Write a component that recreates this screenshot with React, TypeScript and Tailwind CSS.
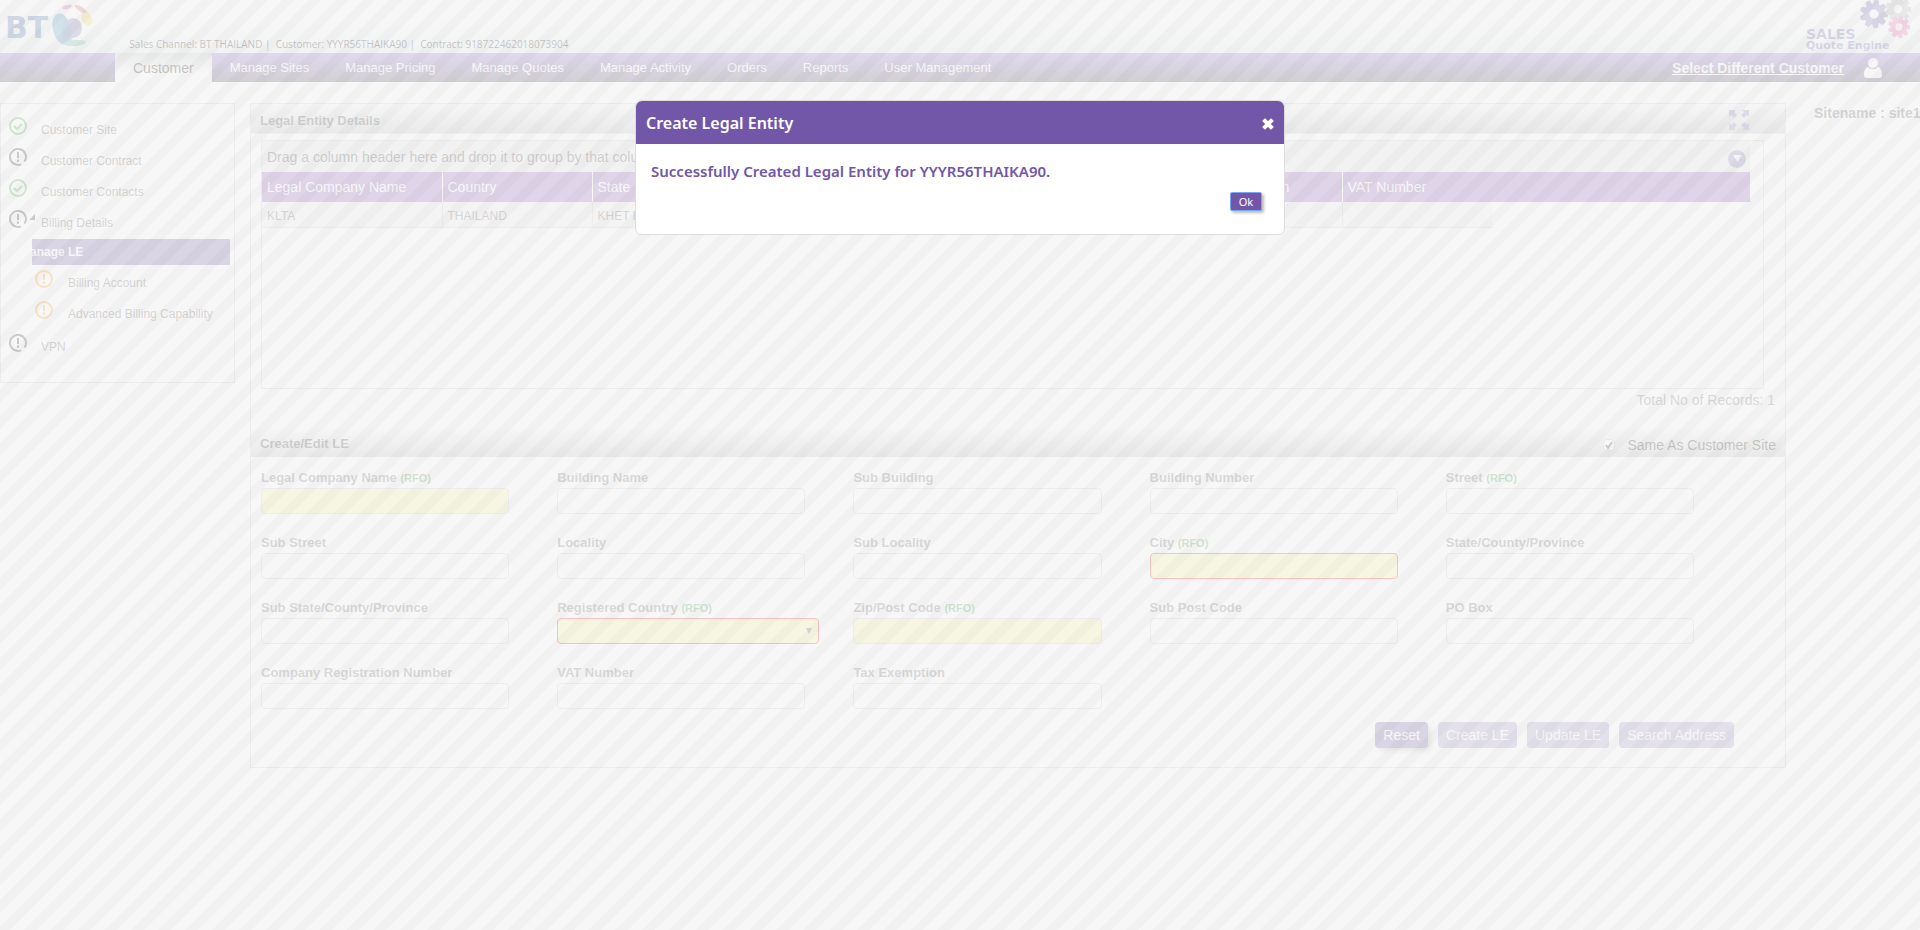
import React from "react";

const navItems = [
  "Manage Sites",
  "Manage Pricing",
  "Manage Quotes",
  "Manage Activity",
  "Orders",
  "Reports",
  "User Management",
];

const columns = [
  "Legal Company Name",
  "Country",
  "State",
  "City",
  "Street",
  "Zip/Post Code",
  "Tax Exemption",
  "VAT Number",
];
const row = ["KLTA", "THAILAND", "KHET BANG RAK", "BANGKOK", "", "", "", ""];

type Field = { label: string; rfo?: boolean; kind?: "yellow" | "error" | "select" };

const fields: Field[] = [
  { label: "Legal Company Name", rfo: true, kind: "yellow" },
  { label: "Building Name" },
  { label: "Sub Building" },
  { label: "Building Number" },
  { label: "Street", rfo: true },
  { label: "Sub Street" },
  { label: "Locality" },
  { label: "Sub Locality" },
  { label: "City", rfo: true, kind: "error" },
  { label: "State/County/Province" },
  { label: "Sub State/County/Province" },
  { label: "Registered Country", rfo: true, kind: "select" },
  { label: "Zip/Post Code", rfo: true, kind: "yellow" },
  { label: "Sub Post Code" },
  { label: "PO Box" },
  { label: "Company Registration Number" },
  { label: "VAT Number" },
  { label: "Tax Exemption" },
];

function Globe() {
  return (
    <svg width="44" height="50" viewBox="46 0 44 50" className="ml-0.5" aria-hidden="true">
      <ellipse cx="69" cy="28" rx="9" ry="10" fill="#7a72b0" />
      <ellipse cx="58" cy="29" rx="9" ry="16" transform="rotate(-14 58 29)" fill="#4a96c4" />
      <path d="M60 15c6 6 9 16 8 27-5 3-8 2-10-3z" fill="#4a5fa6" opacity=".45" />
      <ellipse cx="63" cy="7" rx="5" ry="2" transform="rotate(-18 63 7)" fill="#e0559f" />
      <path d="M71 5c5-1 13 5 16 13 1 3 0 5-1 4-2-5-5-8-9-10-4-3-7-5-6-7z" fill="#e0605a" />
      <ellipse cx="83" cy="19" rx="5" ry="7" transform="rotate(-28 83 19)" fill="#f5d850" />
      <ellipse cx="71" cy="43" rx="11" ry="3" transform="rotate(-4 71 43)" fill="#58b890" />
    </svg>
  );
}

function Gear({ cx, cy, r, color }: { cx: number; cy: number; r: number; color: string }) {
  const teeth = [0, 40, 80, 120, 160, 200, 240, 280, 320];
  return (
    <g fill={color}>
      {teeth.map((a) => (
        <path
          key={a}
          d={`M${cx - r * 0.24} ${cy - r * 0.6}L${cx - r * 0.16} ${cy - r}H${cx + r * 0.16}L${cx + r * 0.24} ${cy - r * 0.6}z`}
          transform={`rotate(${a + 12} ${cx} ${cy})`}
        />
      ))}
      <circle cx={cx} cy={cy} r={r * 0.54} fill="none" stroke={color} strokeWidth={r * 0.42} />
    </g>
  );
}

function StatusIcon({ type }: { type: "ok" | "dark" | "warn" }) {
  const color = type === "ok" ? "#33a833" : type === "dark" ? "#222222" : "#ff9900";
  return (
    <svg width="18" height="18" viewBox="0 0 18 18" fill="none" stroke={color} strokeWidth="2" className="shrink-0" aria-hidden="true">
      {type === "dark" ? <path d="M12 16.300A8 8 0 1 1 15.500 13.500" /> : <circle cx="9" cy="9" r="8" />}
      {type === "ok" ? (
        <path d="M5 9l3 3 5-5" />
      ) : (
        <>
          <path d="M9 4v6" />
          <path d="M9 11.500v2.200" />
        </>
      )}
    </svg>
  );
}

function TreeItem({ type, label, sub, caret }: { type: "ok" | "dark" | "warn"; label: string; sub?: boolean; caret?: boolean }) {
  return (
    <li className={sub ? "flex h-[31px] items-start pl-[34px]" : "flex h-[31px] items-start pl-2"}>
      <StatusIcon type={type} />
      <span className={sub ? "flex w-[15px]" : "flex w-3.5 pl-0.5"}>
        {caret && (
          <svg width="6" height="6" viewBox="0 0 6 6" className="mt-1" aria-hidden="true">
            <path d="M0 6L6 0V6z" fill="#222" />
          </svg>
        )}
      </span>
      <a href="#" className="pt-[5px] text-xs leading-4 text-[#555]">{label}</a>
    </li>
  );
}

export default function App() {
  return (
    <div className="relative min-h-screen overflow-hidden bg-white font-['Liberation_Sans',Arial,sans-serif] text-[#555]">
      <header className="flex h-[53px] items-start justify-between bg-linear-to-b from-white from-40% to-[#e4ecee] pl-[5px]">
        <div className="flex items-end">
          <div className="flex items-start text-[#3465a8]">
            <span className="pt-2 font-['DejaVu_Sans',sans-serif] text-[30px] leading-10 font-bold">BT</span>
            <Globe />
          </div>
          <p className="pl-[35px] font-['Open_Sans','Noto_Sans',sans-serif] text-[10px] leading-3 text-black">
            Sales Channel: BT THAILAND |&nbsp; Customer: YYYR56THAIKA90 |&nbsp; Contract: 918722462018073904
          </p>
        </div>
        <div className="relative h-[53px] w-[114px] font-['DejaVu_Sans',sans-serif] font-bold text-[#6a5aae]">
          <svg width="56" height="40" viewBox="0 0 56 40" className="absolute top-0 right-2" aria-hidden="true">
            <Gear cx={18} cy={14} r={14} color="#7468b4" />
            <Gear cx={42} cy={9} r={13} color="#b4b4b4" />
            <Gear cx={43} cy={27} r={11} color="#ee60ac" />
          </svg>
          <div className="pt-7 text-sm leading-3">SALES</div>
          <div className="text-[11px] leading-3 whitespace-nowrap">Quote Engine</div>
        </div>
      </header>

      <nav className="flex h-[29px] items-stretch bg-linear-to-b from-[#9068dc] to-[#463c54] pr-[38px] pl-[115px] text-[13px] text-white">
        <a href="#" className="flex items-center bg-linear-to-b from-[#c4c4c4] to-white to-70% px-[18px] text-sm text-black">Customer</a>
        {navItems.map((item) => (
          <a key={item} href="#" className="flex items-center px-[18px]">{item}</a>
        ))}
        <a href="#" className="ml-auto flex items-center text-sm font-bold underline">Select Different Customer</a>
        <button type="button" aria-label="User profile" className="ml-5 flex items-center">
          <svg width="18" height="20" viewBox="0 0 18 20" fill="white" aria-hidden="true">
            <circle cx="9" cy="5" r="5" />
            <path d="M4 9c3 3 7 3 10 0 3 1 4 4 4 8 0 2-1 3-3 3H3c-2 0-3-1-3-3 0-4 1-7 4-8z" />
          </svg>
        </button>
      </nav>

      <main className="flex items-start pt-[21px]">
        <aside className="mr-[15px] h-[280px] w-[235px] shrink-0 border border-[#ccc]">
          <ul className="pt-[13px]">
            <TreeItem type="ok" label="Customer Site" />
            <TreeItem type="dark" label="Customer Contract" />
            <TreeItem type="ok" label="Customer Contacts" />
            <TreeItem type="dark" label="Billing Details" caret />
            <li>
              <ul className="-mt-0.5 pb-0.5">
                <li className="mr-1 mb-[5px] ml-[31px] flex h-[26px] items-center overflow-hidden bg-[#6a55a2] text-xs font-bold text-white">
                  <a href="#" className="-ml-3">Manage LE</a>
                </li>
                <TreeItem type="warn" label="Billing Account" sub />
                <TreeItem type="warn" label="Advanced Billing Capability" sub />
              </ul>
            </li>
            <TreeItem type="dark" label="VPN" />
          </ul>
        </aside>

        <section className="min-w-0 flex-1 border border-[#ccc]">
          <div className="flex h-[30px] items-center justify-between border-b border-[#ddd] bg-linear-to-b from-[#fafafa] to-[#bebebe] pr-9 pl-[9px]">
            <h2 className="pt-1 text-[13px] font-bold text-[#333]">Legal Entity Details</h2>
            <button type="button" aria-label="Expand" className="pt-0.5">
              <svg width="20" height="20" viewBox="0 0 20 20" fill="#7f70b8" aria-hidden="true">
                <path d="M0 0h7L5 2l3 3-3 3-3-3-2 2z" />
                <path d="M20 0v7l-2-2-3 3-3-3 3-3-2-2z" />
                <path d="M0 20v-7l2 2 3-3 3 3-3 3 2 2z" />
                <path d="M20 20h-7l2-2-3-3 3-3 3 3 2-2z" />
              </svg>
            </button>
          </div>

          <div className="mt-1.5 mr-[21px] ml-2.5 h-[249px] border border-[#ccc] pr-[13px]">
            <div className="flex h-[31px] items-center justify-between bg-[#e6e6e6] pr-1 pl-[5px] text-sm text-[#333]">
              <span>Drag a column header here and drop it to group by that column.</span>
              <button type="button" aria-label="Grid menu" className="mt-1 flex h-[18px] w-[18px] items-center justify-center rounded-full bg-[#7f70b8]">
                <svg width="9" height="7" viewBox="0 0 9 7" fill="white" aria-hidden="true"><path d="M0 0h9L4.500 7z" /></svg>
              </button>
            </div>
            <table className="w-full table-fixed border-collapse text-left">
              <colgroup>
                <col className="w-[180px]" />
                {columns.slice(1).map((c) => <col key={c} className="w-[150px]" />)}
                <col />
              </colgroup>
              <thead>
                <tr className="h-[30px] bg-[#8c50b4] text-sm text-white">
                  {columns.map((c, i) => (
                    <th key={c} scope="col" className={i < 7 ? "border-r border-white pl-[5px] font-normal" : "pl-[5px] font-normal"}>{c}</th>
                  ))}
                  <td />
                </tr>
              </thead>
              <tbody>
                <tr className="h-[25px] text-xs text-[#555]">
                  {row.map((c, i) => (
                    <td key={i} className={i < 7 ? "overflow-hidden border-r border-b border-[#ccc] bg-[#f0f0f0] pt-1 pl-[5px] whitespace-nowrap" : "border-b border-[#ccc] bg-[#f0f0f0]"}>{c}</td>
                  ))}
                  <td />
                </tr>
              </tbody>
            </table>
          </div>
          <p className="pr-2.5 text-right text-sm leading-[22px] text-[#666]">Total No of Records: 1</p>

          <div className="mt-4 flex h-[30px] items-center justify-between bg-linear-to-b from-white to-[#bebebe] pr-[9px] pl-[9px]">
            <h2 className="pt-1 text-[13px] font-bold text-[#333]">Create/Edit LE</h2>
            <label className="flex items-center gap-3 pt-1.5 text-sm text-black">
              <span className="relative flex h-3 w-3">
                <input type="checkbox" defaultChecked className="h-3 w-3 appearance-none rounded-sm border border-[#bbb] bg-white" />
                <svg width="12" height="12" viewBox="0 0 12 12" fill="none" stroke="#222" strokeWidth="2" className="pointer-events-none absolute inset-0" aria-hidden="true">
                  <path d="M3 6l2 3 4-6" />
                </svg>
              </span>
              Same As Customer Site
            </label>
          </div>

          <form className="grid grid-cols-5 pt-[11px] pr-[43px] pl-2.5" onSubmit={(e) => e.preventDefault()}>
            {fields.map((f, i) => (
              <div key={f.label} className={f.kind === "select" ? "h-[65px] pr-[34px]" : "h-[65px] pr-12"}>
                <label htmlFor={`field-${i}`} className="block h-5 text-[13px] leading-5 font-bold text-[#666]">
                  {f.label} {f.rfo && <span className="text-[11px] text-[#2e9a3e]">(RFO)</span>}
                </label>
                {f.kind === "select" ? (
                  <div className="relative">
                    <select id={`field-${i}`} className="block h-[26px] w-full appearance-none rounded border border-[#f00] bg-[#fffa96]" />
                    <svg width="6" height="6" viewBox="0 0 6 6" fill="#555" className="pointer-events-none absolute top-2.5 right-[7px]" aria-hidden="true"><path d="M0 0h6L3 6z" /></svg>
                  </div>
                ) : (
                  <input
                    id={`field-${i}`}
                    type="text"
                    className={
                      f.kind === "error"
                        ? "block h-[26px] w-full rounded border border-[#f00] bg-[#fffa96]"
                        : f.kind === "yellow"
                          ? "block h-[26px] w-full rounded border border-[#ccc] bg-[#fffa96]"
                          : "block h-[26px] w-full rounded border border-[#ccc] bg-white"
                    }
                  />
                )}
              </div>
            ))}
          </form>

          <div className="-mt-1.5 flex justify-end gap-2.5 pr-[51px] pb-[19px] text-sm text-white">
            <button type="button" className="h-[26px] rounded bg-[#6a55a2] px-2 shadow-[3px_3px_4px_#bbb]">Reset</button>
            <button type="button" className="h-[26px] rounded bg-[#6a55a2] px-2 opacity-65">Create LE</button>
            <button type="button" className="h-[26px] rounded bg-[#6a55a2] px-2 opacity-65">Update LE</button>
            <button type="button" className="h-[26px] rounded bg-[#6a55a2] px-2 opacity-65">Search Address</button>
          </div>
        </section>

        <p className="w-[134px] shrink-0 pl-7 text-sm font-bold whitespace-nowrap text-[#555]">Sitename : site1</p>
      </main>

      <div className="absolute inset-0 bg-[repeating-linear-gradient(135deg,#f5f5f5_0_9px,#eeeeee_10px_18px,#f5f5f5_19px)] opacity-80" />

      <div role="dialog" aria-labelledby="dialog-title" className="absolute inset-x-0 top-[100px] mx-auto w-[650px] rounded-md border border-[#ddd] bg-white font-['Noto_Sans','Open_Sans',sans-serif] text-[#7256a8]">
        <div className="flex h-[43px] items-center justify-between rounded-t-md bg-[#7256a8] px-2.5 text-white">
          <h1 id="dialog-title" className="text-base font-semibold">Create Legal Entity</h1>
          <button type="button" aria-label="Close" className="pt-0.5">
            <svg width="12" height="12" viewBox="0 0 12 12" stroke="white" strokeWidth="4" strokeLinecap="square" aria-hidden="true">
              <path d="M3 3l6 6M9 3l-6 6" />
            </svg>
          </button>
        </div>
        <p className="px-[15px] pt-[17px] text-[15px] leading-5 font-semibold">Successfully Created Legal Entity for YYYR56THAIKA90.</p>
        <div className="flex justify-end pt-[11px] pr-[22px] pb-[23px]">
          <button type="button" className="h-[19px] w-8 rounded-xs border border-[#7aa8f0] bg-[#7256a8] text-[11px] leading-4 text-white shadow-[2px_2px_3px_#bbb]">Ok</button>
        </div>
      </div>
    </div>
  );
}
